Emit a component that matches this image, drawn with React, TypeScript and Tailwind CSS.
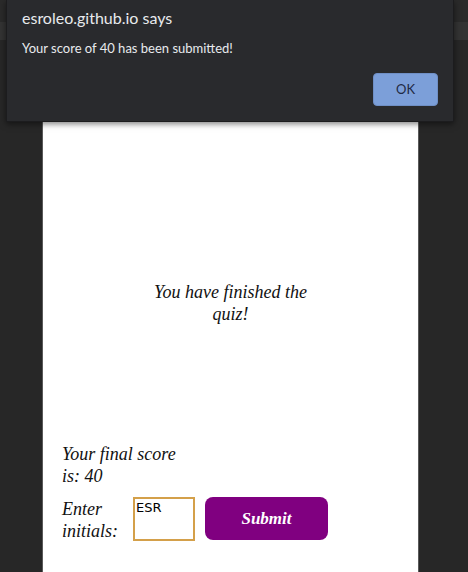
import React from 'react';

export default function App() {
  return (
    <div className="relative h-[572px] w-[468px] overflow-hidden bg-[#272727] flex flex-col">
      <div className="h-[22px] bg-[#2a2a2a]" />
      <div className="h-[18px] bg-[#333333]" />

      <div className="ml-[42px] w-[377px] flex-1 bg-white border-x border-[#5a5a5a] flex flex-col font-['Liberation_Serif',serif] italic text-[#111] text-[18px] leading-[22px]">
        <p className="mt-[241px] w-[190px] mx-auto text-center">You have finished the quiz!</p>

        <div className="mt-[118px] pl-[19px]">
          <p className="w-[124px]">Your final score is: 40</p>
          <div className="mt-[10px] flex items-start">
            <p className="w-[71px] mt-[1px]">Enter initials:</p>
            <input
              defaultValue="ESR"
              className="w-[62px] h-[44px] border-2 border-[#d4a04a] px-[1px] pb-[24px] not-italic font-['DejaVu_Sans',sans-serif] text-[13px] leading-[16px] text-black outline-none"
            />
            <button className="ml-[10px] w-[123px] h-[43px] rounded-[8px] bg-[#800080] text-white font-bold text-[17px]">
              Submit
            </button>
          </div>
        </div>
      </div>

      <div className="absolute left-[6px] top-0 w-[448px] h-[122px] bg-[#292a2d] border border-t-0 border-[#1c1c1e] shadow-[0_2px_6px_rgba(0,0,0,0.5)] font-['Lato',sans-serif] text-[#e8eaed] flex flex-col">
        <p className="mt-[7px] ml-[15px] text-[16px] leading-[22px]">esroleo.github.io says</p>
        <p className="mt-[10px] ml-[15px] text-[13px] leading-[18px]">Your score of 40 has been submitted!</p>
        <div className="mt-[16px] mr-[15px] flex justify-end">
          <button className="w-[65px] h-[33px] rounded-[4px] bg-[#7c9fd9] text-[#1f2a44] text-[13px] border border-[#6f8fc5]">
            OK
          </button>
        </div>
      </div>
    </div>
  );
}
